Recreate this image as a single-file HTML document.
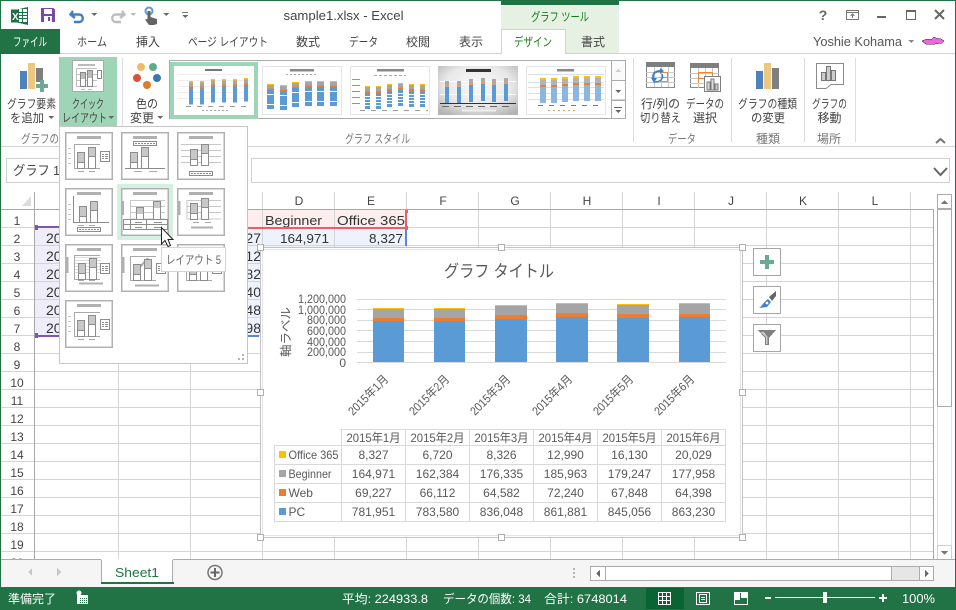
<!DOCTYPE html>
<html lang="ja"><head><meta charset="utf-8"><title>sample1.xlsx - Excel</title>
<style>
html,body{margin:0;padding:0;background:#fff;width:956px;height:610px;overflow:hidden}
svg{display:block;font-family:"Liberation Sans","Noto Sans CJK JP",sans-serif}
text{fill:#444;font-size:12px}
.m{text-anchor:middle}.e{text-anchor:end}
.g text{fill:#595959}
</style></head><body>
<svg width="956" height="610" viewBox="0 0 956 610" xmlns="http://www.w3.org/2000/svg" shape-rendering="crispEdges">
<defs>
<g id="fr"><rect x=".75" y=".75" width="46.5" height="46.5" fill="#fff" stroke="#b1b1b1" stroke-width="1.5"/></g>
<g id="ti"><rect x="12" y="4" width="24" height="3" fill="#b0b0b0"/></g>
<g id="ax"><path d="M9.5 12.5H35M9.5 12V36.5H35" fill="none" stroke="#a8a8a8"/></g>
<g id="yt"><path d="M3 16.5H6M3 21.5H6M3 26.5H6M3 31.5H6" stroke="#c8c8c8"/></g>
<g id="xt"><path d="M13 39.5H19M24 39.5H30" stroke="#aaa"/></g>
<g id="br"><rect x="12.5" y="20.5" width="7" height="16" fill="#fff" stroke="#8c8c8c"/><rect x="13" y="21" width="6" height="9" fill="#c8c8c8"/><path d="M12.5 30.5H19.5" stroke="#8c8c8c"/><rect x="23.5" y="15.5" width="7" height="21" fill="#fff" stroke="#8c8c8c"/><rect x="24" y="16" width="6" height="8" fill="#c8c8c8"/><path d="M23.5 24.5H30.5" stroke="#8c8c8c"/></g>
<g id="lg"><rect x="35.5" y="19.5" width="9" height="10" fill="#fff" stroke="#8c8c8c"/><path d="M37 22.5H39M40 22.5H43M37 24.5H39M40 24.5H43M37 26.5H39M40 26.5H43" stroke="#8c8c8c"/></g>
<g id="hl"><rect x="12.5" y="9.5" width="23" height="4" fill="#fff" stroke="#8c8c8c"/><path d="M14 11.5H34" stroke="#8c8c8c" stroke-dasharray="2 1"/></g>
<g id="s1"><rect y="0" width="4" height="1.5" fill="#ffc000"/><rect y="1.5" width="4" height="4" fill="#a5a5a5"/><rect y="5.5" width="4" height="2" fill="#ed7d31"/><rect y="7.5" width="4" height="16" fill="#5b9bd5"/></g>
<g id="s2"><rect y="0" width="7" height="1" fill="#ffc000"/><rect y="1" width="7" height="3.5" fill="#a5a5a5"/><rect y="4.5" width="7" height="1.5" fill="#ed7d31"/><rect y="6" width="7" height="19" fill="#5b9bd5"/><path d="M0 10.500H7M0 20.500H7" stroke="#fff"/></g>
<g id="s3"><rect y="0" width="5" height="1" fill="#ffc000"/><rect y="1" width="5" height="4" fill="#a5a5a5"/><rect y="5" width="5" height="2" fill="#ed7d31"/><rect y="7" width="5" height="16" fill="#5b9bd5"/><path d="M0 10.500H5M0 13.500H5M0 16.500H5M0 19.500H5" stroke="#fff"/></g>
<g id="s4"><rect x="0" y="0" width="4" height="1" fill="#eee"/><rect y="1" width="4" height="4" fill="#a9a9a9"/><rect y="5" width="4" height="2" fill="#e89a6a"/><rect y="7" width="4" height="17" fill="#5b9bd5"/></g>
<g id="s5"><rect y="0" width="6" height="2" fill="#ffc000"/><rect y="2" width="6" height="5" fill="#b3b3b3"/><rect y="7" width="6" height="2" fill="#ed7d31"/><rect y="9" width="6" height="16" fill="#8ab6e0"/></g>
<path id="chev" d="M0 0H6L3 3Z" fill="#6a6a6a"/>
<radialGradient id="gg" cx=".5" cy=".4" r=".7"><stop offset="0" stop-color="#fafafa"/><stop offset=".6" stop-color="#e8e8e8"/><stop offset="1" stop-color="#b4b4b4"/></radialGradient>
</defs>

<rect width="956" height="610" fill="#fff"/>
<rect x="501" y="1" width="118" height="28" fill="#e6f1e4"/>
<rect x="501" y="1" width="118" height="4" fill="#217346"/>
<rect x="565" y="29" width="54" height="24" fill="#e6f1e4"/>

<!-- QAT -->
<path d="M17 9.5 28 7V25L17 22.5H11V9.5Z" fill="#1e7145"/>
<rect x="19" y="9" width="8" height="13" fill="#fff"/><path d="M19 12.5H27M19 15.5H27M19 18.5H27M22.5 9V22" stroke="#1e7145"/>
<text x="12" y="20" style="font-size:10px;font-weight:bold;fill:#fff">X</text>
<path d="M41 8H53L55 10V22H41Z" fill="#7b47a6"/><rect x="44" y="9" width="8" height="5" fill="#fff"/><rect x="44" y="16" width="8" height="6" fill="#fff"/><rect x="48" y="17" width="2" height="4" fill="#7b47a6"/>
<g shape-rendering="auto"><path d="M73 11 70.500 14.500 75 18M71 14.500H79C84 14.500 84 22 79 22H74" fill="none" stroke="#3f80c4" stroke-width="2.400"/>
<path d="M122 11 124.500 14.500 120 18M124 14.500H116C111 14.500 111 22 116 22H121" fill="none" stroke="#bdbdbd" stroke-width="2.400"/>
<circle cx="149" cy="11" r="3.500" fill="none" stroke="#5b9bd5" stroke-width="2"/><path d="M147.500 11H150.500V17L157 19V24L154 25H149L145 19.500 147.500 19Z" fill="#646464"/></g>
<use href="#chev" x="91" y="13"/><use href="#chev" x="130" y="13" opacity=".45"/><use href="#chev" x="163" y="13"/>
<path d="M182 12.500H188" stroke="#777"/><use href="#chev" x="182" y="15"/>
<text x="343.500" y="20" class="m" textLength="120" lengthAdjust="spacingAndGlyphs" style="font-size:13px">sample1.xlsx - Excel</text>
<text x="560" y="21" class="m" textLength="58" lengthAdjust="spacingAndGlyphs" style="fill:#107c10">グラフ ツール</text>
<text x="823" y="20" class="m" style="font-size:14px;font-weight:bold;fill:#666">?</text>
<rect x="846.500" y="10.500" width="12" height="9" fill="none" stroke="#777"/><path d="M847 12.500H858M852.500 18V14.500M850.500 16 852.500 14 854.500 16" fill="none" stroke="#777"/>
<rect x="877" y="16" width="9" height="2" fill="#666"/>
<rect x="906.500" y="10.500" width="9" height="9" fill="none" stroke="#666"/><rect x="906" y="10" width="10" height="2" fill="#666"/>
<path d="M935 10 944 19M944 10 935 19" stroke="#666" stroke-width="2" shape-rendering="auto"/>
<text x="813" y="46" textLength="89" lengthAdjust="spacingAndGlyphs" style="font-size:13px;fill:#555">Yoshie Kohama</text>
<path d="M908 40H914L911 43Z" fill="#888"/>
<path d="M922 41 927 39H932L934 37 936 38 941 39 944 41 942 43 935 44H926Z" fill="#ee66dd" stroke="#333" stroke-width=".5"/>

<!-- tabs -->
<rect x="0" y="29" width="60" height="25" fill="#217346"/>
<text x="30" y="46" class="m" textLength="34" lengthAdjust="spacingAndGlyphs" style="fill:#fff">ファイル</text>
<path d="M60 53.500H501M565 53.500H956" stroke="#d2d2d2"/>
<path d="M501.500 54V29.500H565.500V54" fill="#fff" stroke="#d2d2d2"/>
<text x="92" y="46" class="m" textLength="30" lengthAdjust="spacingAndGlyphs">ホーム</text>
<text x="148" y="46" class="m" textLength="24" lengthAdjust="spacingAndGlyphs">挿入</text>
<text x="228" y="46" class="m" textLength="80" lengthAdjust="spacingAndGlyphs">ページ レイアウト</text>
<text x="308" y="46" class="m" textLength="24" lengthAdjust="spacingAndGlyphs">数式</text>
<text x="363.500" y="46" class="m" textLength="29" lengthAdjust="spacingAndGlyphs">データ</text>
<text x="418" y="46" class="m" textLength="24" lengthAdjust="spacingAndGlyphs">校閲</text>
<text x="471" y="46" class="m" textLength="24" lengthAdjust="spacingAndGlyphs">表示</text>
<text x="533" y="46" class="m" textLength="38" lengthAdjust="spacingAndGlyphs" style="fill:#107c10">デザイン</text>
<text x="593" y="46" class="m" textLength="24" lengthAdjust="spacingAndGlyphs">書式</text>

<!-- ribbon -->
<rect x="59" y="57" width="58" height="70" fill="#9fd5b7"/>
<path d="M0 146.500H956" stroke="#d2d2d2"/>
<path d="M122.500 58V142M633.500 58V142M731.500 58V142M804.500 58V142M855.500 58V142" stroke="#dcdcdc"/>
<rect x="20" y="71" width="7" height="18" fill="#4f81bd"/><rect x="28" y="63" width="7" height="26" fill="#edc77f"/><rect x="36" y="68" width="7" height="14" fill="#7f7f7f"/>
<rect x="40" y="80" width="4" height="12" fill="#6ea995"/><rect x="36" y="84" width="12" height="4" fill="#6ea995"/>
<text x="31.500" y="108" class="m" textLength="49" lengthAdjust="spacingAndGlyphs">グラフ要素</text>
<text x="27" y="122" class="m" textLength="34" lengthAdjust="spacingAndGlyphs">を追加</text><use href="#chev" x="48" y="116"/>
<rect x="72.500" y="60.500" width="31" height="31" fill="#fff" stroke="#aaa"/>
<rect x="78" y="64" width="17" height="2" fill="#bbb"/>
<path d="M76.500 68.500H97M76.500 68V86.500H97M76.500 74.500H97M76.500 80.500H97" fill="none" stroke="#c0c0c0"/>
<rect x="80.500" y="72.500" width="5" height="14" fill="#fff" stroke="#888"/><rect x="87.500" y="70.500" width="5" height="16" fill="#fff" stroke="#888"/><rect x="81" y="73" width="4" height="6" fill="#bbb"/><rect x="88" y="71" width="4" height="7" fill="#bbb"/>
<rect x="97.500" y="70.500" width="4" height="8" fill="#fff" stroke="#888"/>
<path d="M81 89.500H85M88 89.500H92" stroke="#bbb"/>
<text x="88" y="108" class="m" textLength="32" lengthAdjust="spacingAndGlyphs">クイック</text>
<text x="84.500" y="122" class="m" textLength="45" lengthAdjust="spacingAndGlyphs">レイアウト</text><use href="#chev" x="108" y="116"/>
<g shape-rendering="auto"><circle cx="141" cy="67" r="4" fill="#eebc6c"/><circle cx="153" cy="67" r="4" fill="#5fa98c"/><circle cx="137" cy="78" r="4" fill="#d9533a"/><circle cx="157" cy="78" r="4" fill="#3f76b0"/><circle cx="147" cy="85" r="4" fill="#e07b28"/></g>
<text x="147" y="108" class="m" textLength="22" lengthAdjust="spacingAndGlyphs">色の</text>
<text x="142" y="122" class="m" textLength="24" lengthAdjust="spacingAndGlyphs">変更</text><use href="#chev" x="157" y="116"/>

<!-- gallery -->
<rect x="169.500" y="60.500" width="456" height="58" fill="#fff" stroke="#ababab"/>
<rect x="170" y="62" width="88" height="57" fill="#9fd5b7"/>
<g transform="translate(174,66)"><rect width="80" height="49" fill="#fff"/><rect x="31" y="3" width="17" height="2" fill="#777"/>
<path d="M4 8.500H76M4 14.500H76M4 20.500H76M4 26.500H76M4 32.500H76" stroke="#eee"/>
<use href="#s1" x="15" y="15"/><use href="#s1" x="26" y="15"/><use href="#s1" x="37" y="13"/><use href="#s1" x="48" y="13"/><use href="#s1" x="59" y="13"/><use href="#s1" x="70" y="12"/>
<path d="M12 40.500H78" stroke="#999" stroke-dasharray="5 6"/><path d="M28 44.500H55" stroke="#aaa" stroke-dasharray="2 2"/></g>
<g transform="translate(262,66)"><rect x=".5" y=".5" width="79" height="48" fill="#fff" stroke="#e6e6e6"/><rect x="28" y="3" width="24" height="2.500" fill="#888"/><path d="M24 8.500H56" stroke="#aaa" stroke-dasharray="2 2"/>
<use href="#s2" x="5" y="18"/><use href="#s2" x="18" y="19"/><use href="#s2" x="30" y="16"/><use href="#s2" x="43" y="15"/><use href="#s2" x="55" y="15"/><use href="#s2" x="68" y="15"/></g>
<g transform="translate(350,66)"><rect x=".5" y=".5" width="79" height="48" fill="#fff" stroke="#e6e6e6"/><rect x="27" y="3" width="27" height="2.500" fill="#888"/><path d="M24 9.500H56" stroke="#aaa" stroke-dasharray="3 2"/>
<path d="M2 13.500H10M2 19.500H10M2 25.500H10M2 31.500H10M2 37.500H10" stroke="#b08a80"/>
<use href="#s3" x="15" y="20"/><use href="#s3" x="26" y="20"/><use href="#s3" x="37" y="18"/><use href="#s3" x="48" y="17"/><use href="#s3" x="59" y="18"/><use href="#s3" x="70" y="18"/>
<path d="M10 44.500H78" stroke="#999" stroke-dasharray="5 6"/></g>
<g transform="translate(438,66)"><rect width="80" height="49" fill="url(#gg)"/><rect x="28" y="3" width="25" height="3" fill="#333"/>
<path d="M2 28.500H78M2 15.500H78" stroke="#fff"/>
<use href="#s4" x="7" y="14"/><use href="#s4" x="19" y="14"/><use href="#s4" x="31" y="12"/><use href="#s4" x="43" y="11"/><use href="#s4" x="54" y="12"/><use href="#s4" x="66" y="11"/>
<path d="M2 37.500H78" stroke="#333"/><path d="M4 40.500H76" stroke="#666" stroke-dasharray="7 5"/><path d="M24 44.500H58" stroke="#eee" stroke-width="2"/></g>
<g transform="translate(526,66)"><rect x=".5" y=".5" width="79" height="48" fill="#fff" stroke="#e6e6e6"/><rect x="31" y="3" width="17" height="2.500" fill="#888"/>
<path d="M2 8.500H78M2 16.500H78M2 21.500H78M2 27.500H78M2 33.500H78" stroke="#d5dfee"/>
<use href="#s5" x="14" y="12"/><use href="#s5" x="25" y="12"/><use href="#s5" x="36" y="11"/><use href="#s5" x="47" y="10"/><use href="#s5" x="58" y="10"/><use href="#s5" x="69" y="10"/>
<path d="M12 39.500H78" stroke="#777" stroke-dasharray="5 6"/><path d="M22 44.500H52" stroke="#e4a060" stroke-dasharray="2 3"/></g>
<rect x="611.500" y="60.500" width="14" height="20" fill="#fafafa" stroke="#ababab"/><rect x="611.500" y="80.500" width="14" height="19.500" fill="#fff" stroke="#ababab"/><rect x="611.500" y="100.500" width="14" height="18" fill="#fff" stroke="#ababab"/>
<path d="M615 72H621L618 69Z" fill="#ccc"/><path d="M615 90H621L618 93Z" fill="#666"/><path d="M614 107.500H622" stroke="#666"/><path d="M615 110H621L618 113Z" fill="#666"/>
<!-- data icons -->
<rect x="646.500" y="62.500" width="28" height="25" fill="#fff" stroke="#8a8a8a"/><rect x="646" y="62" width="29" height="5" fill="#7f7f7f"/>
<path d="M646 72.500H675M646 77.500H675M646 82.500H675M654.500 67V87M661.500 67V87M668.500 67V87" stroke="#c8c8c8"/>
<path d="M660 72.500H667.500V81.500H660M660 77.500H667.500" fill="none" stroke="#e88a3c"/>
<g shape-rendering="auto"><path d="M654 80C651 73 656 71 661 71" fill="none" stroke="#3f80c4" stroke-width="2"/><path d="M660 68 664 71 660 74Z M651 78H657L654 83Z" fill="#3f80c4"/><path d="M662 74C664 79 660 82 654 82" fill="none" stroke="#3f80c4" stroke-width="1.500"/></g>
<rect x="690.500" y="63.500" width="28" height="24" fill="#fff" stroke="#8a8a8a"/><rect x="690" y="63" width="29" height="5" fill="#7f7f7f"/>
<path d="M690 73.500H719M690 78.500H719M690 83.500H719M698.500 68V88M705.500 68V88M712.500 68V88" stroke="#c8c8c8"/>
<path d="M698.500 83V72.500H712.500V78M698.500 78.500H706" fill="none" stroke="#e88a3c"/>
<rect x="704.500" y="76.500" width="16" height="15" fill="#fff" stroke="#7f7f7f"/><rect x="707" y="82" width="3" height="8" fill="#ddd" stroke="#777" stroke-width=".8"/><rect x="711" y="79" width="3" height="11" fill="#ddd" stroke="#777" stroke-width=".8"/><rect x="715" y="84" width="3" height="6" fill="#ccc" stroke="#777" stroke-width=".8"/>
<text x="660.500" y="108" class="m" textLength="39" lengthAdjust="spacingAndGlyphs">行/列の</text><text x="660.500" y="122" class="m" textLength="41" lengthAdjust="spacingAndGlyphs">切り替え</text>
<text x="705" y="108" class="m" textLength="38" lengthAdjust="spacingAndGlyphs">データの</text><text x="705" y="122" class="m" textLength="24" lengthAdjust="spacingAndGlyphs">選択</text>
<rect x="756" y="71" width="7" height="18" fill="#4f81bd"/><rect x="764" y="63" width="7" height="26" fill="#edc77f"/><rect x="772" y="68" width="7" height="21" fill="#7f7f7f"/>
<text x="767.500" y="108" class="m" textLength="59" lengthAdjust="spacingAndGlyphs">グラフの種類</text><text x="768" y="122" class="m" textLength="34" lengthAdjust="spacingAndGlyphs">の変更</text>
<path d="M816.500 63.500H843.500V84.500H831L826 88.500H816.500Z" fill="#fff" stroke="#8a8a8a"/>
<rect x="821.500" y="72.500" width="4" height="8" fill="#ccc" stroke="#777"/><rect x="826.500" y="66.500" width="4" height="14" fill="#ccc" stroke="#777"/><rect x="831.500" y="70.500" width="4" height="10" fill="#ccc" stroke="#777"/>
<text x="829.500" y="108" class="m" textLength="35" lengthAdjust="spacingAndGlyphs">グラフの</text><text x="829.500" y="122" class="m" textLength="24" lengthAdjust="spacingAndGlyphs">移動</text>
<!-- group labels -->
<text x="21" y="143" textLength="38" lengthAdjust="spacingAndGlyphs" style="fill:#777">グラフの</text>
<text x="377.500" y="143" class="m" textLength="65" lengthAdjust="spacingAndGlyphs" style="fill:#777">グラフ スタイル</text>
<text x="682" y="143" class="m" textLength="28" lengthAdjust="spacingAndGlyphs" style="fill:#777">データ</text>
<text x="768" y="143" class="m" textLength="24" lengthAdjust="spacingAndGlyphs" style="fill:#777">種類</text>
<text x="829" y="143" class="m" textLength="24" lengthAdjust="spacingAndGlyphs" style="fill:#777">場所</text>
<path d="M936 143 940.500 139 945 143" fill="none" stroke="#777" stroke-width="2" shape-rendering="auto"/>

<!-- formula bar -->
<rect x="6.500" y="158.500" width="60" height="24" fill="#fff" stroke="#d0d0d0"/>
<text x="13" y="175" textLength="47" lengthAdjust="spacingAndGlyphs" style="font-size:13px">グラフ 1</text>
<rect x="251.500" y="158.500" width="698" height="24" fill="#fff" stroke="#d0d0d0"/>
<path d="M934 168 940.500 175 947 168" fill="none" stroke="#666" stroke-width="2" shape-rendering="auto"/>

<!-- sheet -->
<rect x="191" y="210" width="216" height="17" fill="#fdeeee"/>
<rect x="191" y="228" width="216" height="107" fill="#edf2fc"/>
<rect x="35" y="228" width="84" height="107" fill="#efedf8"/>
<path d="M35 227.500H933M35 245.500H933M35 263.500H933M35 281.500H933M35 299.500H933M35 317.500H933M35 335.500H933M35 353.500H933M35 371.500H933M35 389.500H933M35 407.500H933M35 425.500H933M35 443.500H933M35 461.500H933M35 479.500H933M35 497.500H933M35 515.500H933M35 533.500H933M35 551.500H933" stroke="#d4d4d4"/>
<path d="M118.500 192V559M190.500 192V559M262.500 192V559M334.500 192V559M406.500 192V559M478.500 192V559M550.500 192V559M622.500 192V559M694.500 192V559M766.500 192V559M838.500 192V559M910.500 192V559" stroke="#d4d4d4"/>
<path d="M0 227.500H35M0 245.500H35M0 263.500H35M0 281.500H35M0 299.500H35M0 317.500H35M0 335.500H35M0 353.500H35M0 371.500H35M0 389.500H35M0 407.500H35M0 425.500H35M0 443.500H35M0 461.500H35M0 479.500H35M0 497.500H35M0 515.500H35M0 533.500H35M0 551.500H35" stroke="#d4d4d4"/>
<path d="M0 209.500H933.500V559M34.500 192V559" fill="none" stroke="#a8a8a8"/>
<path d="M31 196V206H22Z" fill="#dcdcdc"/>
<text x="299" y="205" class="m">D</text><text x="371" y="205" class="m">E</text><text x="443" y="205" class="m">F</text><text x="515" y="205" class="m">G</text><text x="587" y="205" class="m">H</text><text x="659" y="205" class="m">I</text><text x="731" y="205" class="m">J</text><text x="803" y="205" class="m">K</text><text x="875" y="205" class="m">L</text>
<text x="17" y="225" class="m">1</text><text x="17" y="243" class="m">2</text><text x="17" y="261" class="m">3</text><text x="17" y="279" class="m">4</text><text x="17" y="297" class="m">5</text><text x="17" y="315" class="m">6</text><text x="17" y="333" class="m">7</text><text x="17" y="351" class="m">8</text><text x="17" y="369" class="m">9</text><text x="17" y="387" class="m">10</text><text x="17" y="405" class="m">11</text><text x="17" y="423" class="m">12</text><text x="17" y="441" class="m">13</text><text x="17" y="459" class="m">14</text><text x="17" y="477" class="m">15</text><text x="17" y="495" class="m">16</text><text x="17" y="513" class="m">17</text><text x="17" y="531" class="m">18</text><text x="17" y="549" class="m">19</text><text x="17" y="567" class="m">20</text>
<g>
<text x="46" y="243" style="font-size:14px;fill:#333">20</text><text x="46" y="261" style="font-size:14px;fill:#333">20</text><text x="46" y="279" style="font-size:14px;fill:#333">20</text><text x="46" y="297" style="font-size:14px;fill:#333">20</text><text x="46" y="315" style="font-size:14px;fill:#333">20</text><text x="46" y="333" style="font-size:14px;fill:#333">20</text>
<text x="261" y="243" class="e" style="font-size:14px;fill:#333">27</text><text x="261" y="261" class="e" style="font-size:14px;fill:#333">12</text><text x="261" y="279" class="e" style="font-size:14px;fill:#333">82</text><text x="261" y="297" class="e" style="font-size:14px;fill:#333">40</text><text x="261" y="315" class="e" style="font-size:14px;fill:#333">48</text><text x="261" y="333" class="e" style="font-size:14px;fill:#333">98</text>
<text x="265" y="225" textLength="57" lengthAdjust="spacingAndGlyphs" style="font-size:13px;fill:#333">Beginner</text>
<text x="337" y="225" textLength="68" lengthAdjust="spacingAndGlyphs" style="font-size:13px;fill:#333">Office 365</text>
<text x="329" y="243" class="e" textLength="49" lengthAdjust="spacingAndGlyphs" style="font-size:13px;fill:#333">164,971</text>
<text x="403" y="243" class="e" textLength="34" lengthAdjust="spacingAndGlyphs" style="font-size:13px;fill:#333">8,327</text>
</g>
<!-- selection borders -->
<rect x="38" y="226" width="153" height="2" fill="#7e57b5"/><rect x="191" y="227" width="215" height="2" fill="#e85f66"/>
<rect x="38" y="335" width="81" height="2" fill="#7e57b5"/><rect x="119" y="335" width="140" height="2" fill="#5b84e0"/>
<rect x="405" y="210" width="2" height="16" fill="#e85f66"/><rect x="405" y="230" width="2" height="16" fill="#5b84e0"/>
<rect x="405" y="210" width="3" height="3" fill="#e85f66"/><rect x="405" y="226" width="3" height="4" fill="#e85f66"/>
<rect x="35" y="225" width="3" height="5" fill="#7e57b5"/><rect x="35" y="333" width="3" height="5" fill="#7e57b5"/>

<!-- chart -->
<rect x="260.500" y="247.500" width="482" height="290" fill="#fff" stroke="#c4c4c4"/>
<rect x="262.500" y="249.500" width="478" height="286" fill="#fff" stroke="#e4e4e4"/>
<g class="g">
<text x="499" y="277" class="m" textLength="110" lengthAdjust="spacingAndGlyphs" style="font-size:17px">グラフ タイトル</text>
<path d="M357 299.500H726M357 309.500H726M357 320.500H726M357 330.500H726M357 341.500H726M357 352.500H726M357 362.500H726" stroke="#d9d9d9"/>
<text x="346" y="303" class="e" textLength="48" lengthAdjust="spacingAndGlyphs">1,200,000</text><text x="346" y="314" class="e" textLength="48" lengthAdjust="spacingAndGlyphs">1,000,000</text><text x="346" y="324" class="e" textLength="39" lengthAdjust="spacingAndGlyphs">800,000</text><text x="346" y="335" class="e" textLength="39" lengthAdjust="spacingAndGlyphs">600,000</text><text x="346" y="346" class="e" textLength="39" lengthAdjust="spacingAndGlyphs">400,000</text><text x="346" y="356" class="e" textLength="39" lengthAdjust="spacingAndGlyphs">200,000</text><text x="346" y="367" class="e">0</text>
<text transform="translate(290,332) rotate(-90)" class="m" textLength="50" lengthAdjust="spacingAndGlyphs">軸ラベル</text>
<!-- bars -->
<rect x="373" y="321" width="31" height="41" fill="#5b9bd5"/><rect x="373" y="318" width="31" height="3" fill="#ed7d31"/><rect x="373" y="309" width="31" height="9" fill="#a5a5a5"/><rect x="373" y="308" width="31" height="1" fill="#ffc000"/>
<rect x="434" y="321" width="31" height="41" fill="#5b9bd5"/><rect x="434" y="318" width="31" height="3" fill="#ed7d31"/><rect x="434" y="309" width="31" height="9" fill="#a5a5a5"/><rect x="434" y="308" width="31" height="1" fill="#ffc000"/>
<rect x="495" y="319" width="32" height="43" fill="#5b9bd5"/><rect x="495" y="315" width="32" height="4" fill="#ed7d31"/><rect x="495" y="306" width="32" height="9" fill="#a5a5a5"/><rect x="495" y="305" width="32" height="1" fill="#ffc000"/>
<rect x="556" y="317" width="32" height="45" fill="#5b9bd5"/><rect x="556" y="313" width="32" height="4" fill="#ed7d31"/><rect x="556" y="304" width="32" height="9" fill="#a5a5a5"/><rect x="556" y="303" width="32" height="1" fill="#ffc000"/>
<rect x="617" y="318" width="32" height="44" fill="#5b9bd5"/><rect x="617" y="314" width="32" height="4" fill="#ed7d31"/><rect x="617" y="305" width="32" height="9" fill="#a5a5a5"/><rect x="617" y="304" width="32" height="1" fill="#ffc000"/>
<rect x="679" y="317" width="31" height="45" fill="#5b9bd5"/><rect x="679" y="314" width="31" height="3" fill="#ed7d31"/><rect x="679" y="304" width="31" height="10" fill="#a5a5a5"/><rect x="679" y="303" width="31" height="1" fill="#ffc000"/>
<g shape-rendering="auto">
<text transform="translate(389,380) rotate(-45)" class="e" textLength="51" lengthAdjust="spacingAndGlyphs">2015年1月</text>
<text transform="translate(450,380) rotate(-45)" class="e" textLength="51" lengthAdjust="spacingAndGlyphs">2015年2月</text>
<text transform="translate(511,380) rotate(-45)" class="e" textLength="51" lengthAdjust="spacingAndGlyphs">2015年3月</text>
<text transform="translate(573,380) rotate(-45)" class="e" textLength="51" lengthAdjust="spacingAndGlyphs">2015年4月</text>
<text transform="translate(634,380) rotate(-45)" class="e" textLength="51" lengthAdjust="spacingAndGlyphs">2015年5月</text>
<text transform="translate(695,380) rotate(-45)" class="e" textLength="51" lengthAdjust="spacingAndGlyphs">2015年6月</text>
</g>
<path d="M341.500 429.500H725.500M275 445.500H725.500M275 464.500H725.500M275 483.500H725.500M275 502.500H725.500M275 521.500H725.500M274.500 445V522M341.500 429V522M405.500 429V522M469.500 429V522M533.500 429V522M597.500 429V522M661.500 429V522M725.500 429V522" stroke="#d9d9d9" fill="none"/>
<text x="373.500" y="442" class="m" textLength="54" lengthAdjust="spacingAndGlyphs">2015年1月</text><text x="437.500" y="442" class="m" textLength="54" lengthAdjust="spacingAndGlyphs">2015年2月</text><text x="501.500" y="442" class="m" textLength="54" lengthAdjust="spacingAndGlyphs">2015年3月</text><text x="565.500" y="442" class="m" textLength="54" lengthAdjust="spacingAndGlyphs">2015年4月</text><text x="629.500" y="442" class="m" textLength="54" lengthAdjust="spacingAndGlyphs">2015年5月</text><text x="693.500" y="442" class="m" textLength="54" lengthAdjust="spacingAndGlyphs">2015年6月</text>
<rect x="279" y="451" width="7" height="7" fill="#ffc000"/><rect x="279" y="470" width="7" height="7" fill="#a5a5a5"/><rect x="279" y="489" width="7" height="7" fill="#ed7d31"/><rect x="279" y="508" width="7" height="7" fill="#5b9bd5"/>
<text x="288.500" y="459" textLength="50" lengthAdjust="spacingAndGlyphs">Office 365</text><text x="288.500" y="478" textLength="43" lengthAdjust="spacingAndGlyphs">Beginner</text><text x="288.500" y="497">Web</text><text x="288.500" y="516">PC</text>
<text x="373.500" y="459" class="m">8,327</text><text x="437.500" y="459" class="m">6,720</text><text x="501.500" y="459" class="m">8,326</text><text x="565.500" y="459" class="m">12,990</text><text x="629.500" y="459" class="m">16,130</text><text x="693.500" y="459" class="m">20,029</text>
<text x="373.500" y="478" class="m">164,971</text><text x="437.500" y="478" class="m">162,384</text><text x="501.500" y="478" class="m">176,335</text><text x="565.500" y="478" class="m">185,963</text><text x="629.500" y="478" class="m">179,247</text><text x="693.500" y="478" class="m">177,958</text>
<text x="373.500" y="497" class="m">69,227</text><text x="437.500" y="497" class="m">66,112</text><text x="501.500" y="497" class="m">64,582</text><text x="565.500" y="497" class="m">72,240</text><text x="629.500" y="497" class="m">67,848</text><text x="693.500" y="497" class="m">64,398</text>
<text x="373.500" y="516" class="m">781,951</text><text x="437.500" y="516" class="m">783,580</text><text x="501.500" y="516" class="m">836,048</text><text x="565.500" y="516" class="m">861,881</text><text x="629.500" y="516" class="m">845,056</text><text x="693.500" y="516" class="m">863,230</text>
</g>
<g fill="#fff" stroke="#b0b0b0"><rect x="257.500" y="244.500" width="6" height="6"/><rect x="498.500" y="244.500" width="6" height="6"/><rect x="739.500" y="244.500" width="6" height="6"/><rect x="257.500" y="389.500" width="6" height="6"/><rect x="739.500" y="389.500" width="6" height="6"/><rect x="257.500" y="534.500" width="6" height="6"/><rect x="498.500" y="534.500" width="6" height="6"/><rect x="739.500" y="534.500" width="6" height="6"/></g>
<g fill="#fff" stroke="#a6a6a6"><rect x="753.500" y="248.500" width="27" height="27"/><rect x="753.500" y="286.500" width="27" height="27"/><rect x="753.500" y="324.500" width="27" height="27"/></g>
<rect x="765" y="255" width="4" height="14" fill="#6aa993"/><rect x="760" y="260" width="14" height="4" fill="#6aa993"/>
<g shape-rendering="auto"><path d="M769 297 776 291V296L772 301Z" fill="#666"/><path d="M768 299 771 302 767 307 759 308C762 306 763 303 768 299Z" fill="#3f80c4"/><circle cx="767" cy="303" r="1.800" fill="#fff" stroke="#3f80c4" stroke-width=".8"/></g>
<path d="M758 330H776L769 338V345H765V338Z" fill="#808080"/><path d="M761 332H764L767.500 337V344H766V337.500Z" fill="#fff" opacity=".6"/>

<!-- dropdown gallery -->
<rect x="59.500" y="126.500" width="188" height="237" fill="#fff" stroke="#c6c6c6"/>
<rect x="117" y="184" width="56" height="56" fill="#d3f0e0"/>
<g transform="translate(65,132)"><use href="#fr"/><use href="#ti"/><use href="#ax"/><use href="#yt"/><use href="#xt"/><use href="#br"/><use href="#lg"/></g>
<g transform="translate(121,132)"><use href="#fr"/><use href="#ti"/><use href="#hl"/><path d="M4 36.500H44" stroke="#8c8c8c"/><use href="#br" transform="translate(-3,0)"/><path d="M13 39.500H21M28 39.500H36" stroke="#aaa"/></g>
<g transform="translate(177,132)"><use href="#fr"/><use href="#ti"/><path d="M4 12.500H44M4 18.500H44M4 24.500H44M4 30.500H44" stroke="#c8c8c8"/><use href="#br" transform="translate(1,-3)"/><rect x="12.500" y="39.500" width="23" height="4" fill="#fff" stroke="#8c8c8c"/><path d="M14 41.500H34" stroke="#8c8c8c" stroke-dasharray="2 1"/></g>
<g transform="translate(65,188)"><use href="#fr"/><use href="#ti"/><path d="M8.500 8V34.500H44" fill="none" stroke="#8c8c8c"/><use href="#yt"/><use href="#br" transform="translate(2,-2)"/><path d="M13 37.500H19M24 37.500H30" stroke="#aaa"/><rect x="12.500" y="39.500" width="23" height="4" fill="#fff" stroke="#8c8c8c"/><path d="M14 41.500H34" stroke="#8c8c8c" stroke-dasharray="2 1"/></g>
<g transform="translate(121,188)"><use href="#fr"/><use href="#ti"/><path d="M2 13V27" stroke="#b0b0b0" stroke-width="2"/><path d="M9.500 12.500H44M9.500 12V31H44M9 18.500H44M9 24.500H44" fill="none" stroke="#c8c8c8"/><rect x="15.500" y="19.500" width="7" height="12" fill="#fff" stroke="#8c8c8c"/><rect x="16" y="20" width="6" height="6" fill="#c8c8c8"/><rect x="32.500" y="13.500" width="7" height="18" fill="#fff" stroke="#8c8c8c"/><rect x="33" y="14" width="6" height="6" fill="#c8c8c8"/>
<rect x="2.500" y="31.500" width="44" height="10" fill="#fff" stroke="#8c8c8c"/><path d="M9.500 31.500V41.500M25.500 31.500V41.500M2.500 36.500H46.500M14 34.500H21M33 34.500H41M14 39.500H21M33 39.500H41" stroke="#8c8c8c"/></g>
<g transform="translate(177,188)"><use href="#fr"/><use href="#ti"/><path d="M2.500 13V27" stroke="#b0b0b0" stroke-width="2"/><path d="M10.500 12.500H44M10 12V31H44M10 18.500H44M10 24.500H44" fill="none" stroke="#c8c8c8"/><use href="#br" transform="translate(1,-5)"/><path d="M14 39.500H36" stroke="#b0b0b0" stroke-width="2"/><path d="M16 34.500H22M28 34.500H34" stroke="#aaa"/></g>
<g transform="translate(65,244)"><use href="#fr"/><use href="#ti"/><path d="M2.500 13V29" stroke="#b0b0b0" stroke-width="2"/><path d="M9.500 13.500H36M9.500 16.500H36M9.500 19.500H36M9.500 22.500H36M9.500 25.500H36M9.500 28.500H36" stroke="#dcdcdc"/><use href="#ax" transform="translate(0,-1)"/><use href="#br" transform="translate(1,-1)"/><use href="#lg"/><path d="M14 39.500H38" stroke="#b0b0b0" stroke-width="2"/><path d="M13 36.500H19M24 36.500H30" stroke="#aaa"/></g>
<g transform="translate(121,244)"><use href="#fr"/><use href="#ti"/><path d="M2.500 13V29" stroke="#b0b0b0" stroke-width="2"/><use href="#ax"/><path d="M18 24 27 14" stroke="#aaa" stroke-width="2"/><use href="#br"/><use href="#lg"/><path d="M14 41.500H38" stroke="#b0b0b0" stroke-width="2"/></g>
<g transform="translate(177,244)"><use href="#fr"/><use href="#ti"/><use href="#ax"/><use href="#br"/><use href="#lg"/></g>
<g transform="translate(65,300)"><use href="#fr"/><use href="#ti"/><use href="#ax"/><use href="#yt"/><use href="#xt"/><use href="#br"/><use href="#lg"/></g>
<g fill="#b5b5b5"><rect x="242" y="354" width="2" height="2"/><rect x="238" y="358" width="2" height="2"/><rect x="242" y="358" width="2" height="2"/></g>
<rect x="161.500" y="247.500" width="64" height="24" fill="#fff" stroke="#d4d4d4"/>
<text x="193.500" y="264" class="m" textLength="55" lengthAdjust="spacingAndGlyphs" style="fill:#666">レイアウト 5</text>
<path d="M161.500 227.500V244L165 240.500 168 246.500 170.500 245.500 168 239.500H173Z" fill="#fff" stroke="#222" shape-rendering="auto"/>

<!-- scrollbars -->
<rect x="934" y="192" width="21" height="367" fill="#fff"/>
<rect x="937.500" y="194.500" width="14" height="14" fill="#fff" stroke="#ababab"/><path d="M941 204H948L944.500 200Z" fill="#777"/>
<rect x="937.500" y="209.500" width="14" height="197" fill="#fff" stroke="#ababab"/>
<path d="M937.500 407V545M951.500 407V545" stroke="#e4e4e4"/>
<rect x="937.500" y="545.500" width="14" height="14" fill="#fff" stroke="#d0d0d0"/><path d="M941 551H948L944.500 555Z" fill="#777"/>
<!-- tabs bar -->
<rect x="1" y="559" width="954" height="28" fill="#f5f5f5"/>
<path d="M1 559.500H101M173 559.500H955" stroke="#ababab"/>
<path d="M101.500 560V583M172.500 560V583" stroke="#ababab"/>
<rect x="102" y="559" width="70" height="23" fill="#fff"/><rect x="101" y="582" width="73" height="2" fill="#217346"/>
<text x="137" y="577" class="m" textLength="44" lengthAdjust="spacingAndGlyphs" style="font-size:13px;fill:#217346">Sheet1</text>
<path d="M32 568V576L28 572ZM57 568V576L61 572Z" fill="#c6c6c6"/>
<g shape-rendering="auto"><circle cx="215" cy="572.500" r="7" fill="none" stroke="#777" stroke-width="1.500"/><path d="M215 568V577M210.500 572.500H219.500" stroke="#666" stroke-width="2"/></g>
<g fill="#b5b5b5"><rect x="573" y="568" width="2" height="2"/><rect x="573" y="572" width="2" height="2"/><rect x="573" y="576" width="2" height="2"/></g>
<rect x="590.500" y="566.500" width="343" height="14" fill="#e6e6e6" stroke="#ababab"/>
<rect x="605.500" y="566.500" width="286" height="14" fill="#fff" stroke="#ababab"/>
<rect x="590.500" y="566.500" width="15" height="14" fill="#fff" stroke="#ababab"/><path d="M600 570V577L596 573.500Z" fill="#666"/>
<rect x="919.500" y="566.500" width="14" height="14" fill="#fff" stroke="#ababab"/><path d="M925 570V577L929 573.500Z" fill="#666"/>

<!-- status bar -->
<rect y="587" width="956" height="23" fill="#217346"/>
<text x="8" y="603" textLength="48" lengthAdjust="spacingAndGlyphs" style="fill:#fff">準備完了</text>
<rect x="77" y="595" width="11" height="9" fill="#fff"/><circle cx="79" cy="593" r="2.500" fill="#fff" shape-rendering="auto"/><path d="M80 598.500H87M80 600.500H87M80 602.500H87" stroke="#217346" stroke-dasharray="1 1"/>
<text x="342" y="603" textLength="86" lengthAdjust="spacingAndGlyphs" style="fill:#fff">平均: 224933.8</text>
<text x="443" y="603" textLength="88" lengthAdjust="spacingAndGlyphs" style="fill:#fff">データの個数: 34</text>
<text x="544" y="603" textLength="83" lengthAdjust="spacingAndGlyphs" style="fill:#fff">合計: 6748014</text>
<rect x="646" y="588" width="38" height="21" fill="#0a6332"/>
<path d="M658.500 592.500H670.500V604.500H658.500ZM658.500 596.500H670.500M658.500 600.500H670.500M662.500 592.500V604.500M666.500 592.500V604.500" fill="none" stroke="#fff"/>
<rect x="696.500" y="592.500" width="13" height="12" fill="none" stroke="#fff"/><rect x="699.500" y="594.500" width="7" height="8" fill="none" stroke="#fff"/><path d="M701 597.500H705M701 599.500H705" stroke="#fff"/>
<rect x="734.500" y="592.500" width="13" height="12" fill="none" stroke="#fff"/><rect x="735" y="593" width="5" height="7" fill="#fff"/><rect x="741" y="593" width="6" height="5" fill="#fff"/>
<rect x="765" y="597" width="6" height="2" fill="#fff"/>
<path d="M775 597.500H875" stroke="#fff"/><rect x="823" y="592" width="4" height="11" fill="#fff"/>
<rect x="879" y="597" width="8" height="2" fill="#fff"/><rect x="882" y="594" width="2" height="8" fill="#fff"/>
<text x="902" y="603" textLength="33" lengthAdjust="spacingAndGlyphs" style="font-size:13px;fill:#fff">100%</text>
<rect width="956" height="1" fill="#217346"/><rect width="1" height="610" fill="#217346"/><rect x="955" width="1" height="610" fill="#217346"/>
</svg>
</body></html>
